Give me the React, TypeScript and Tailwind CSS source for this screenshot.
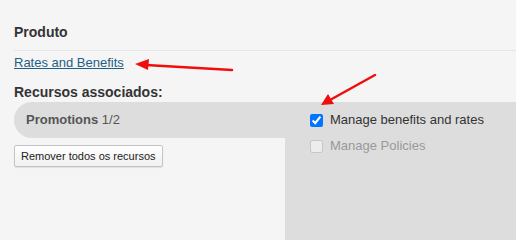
import React from 'react';

export default function App() {
  return (
    <div className="relative w-[516px] h-[240px] overflow-hidden bg-[#f5f5f5] font-['Liberation_Sans',Arial,sans-serif] text-[#333]">
      <div className="pt-[24px]">
        {/* Produto */}
        <h3 className="pl-[14px] text-[14px] font-bold leading-[16px] text-[#333]">Produto</h3>
        <div className="ml-[14px] mt-[10px] border-t border-[#e6e6e6]" />
        <div className="pl-[14px] mt-[3px] leading-[16px]">
          <a href="#" className="text-[13px] text-[#1f5f85] underline">Rates and Benefits</a>
        </div>

        {/* Recursos */}
        <h3 className="pl-[14px] mt-[13px] text-[14px] font-bold leading-[17px] text-[#333]">Recursos associados:</h3>
        <div className="ml-[14px] mt-[1px] h-[36px] rounded-l-[18px] bg-[#dddddd] flex items-center pl-[12px]">
          <span className="text-[13px] text-[#555]"><b>Promotions</b> 1/2</span>
        </div>
        <div className="pl-[14px] mt-[5px]">
          <button className="h-[22px] px-[6px] text-[11px] text-[#222] bg-gradient-to-b from-white to-[#f0f0f0] border border-[#c4c4c4] rounded-[2px] shadow-[0_1px_1px_rgba(0,0,0,0.08)]">
            Remover todos os recursos
          </button>
        </div>
      </div>

      {/* dropdown panel */}
      <div className="absolute left-[285px] top-[102px] right-0 bottom-0 bg-[#dddddd] pt-[10px] pl-[25px]">
        <label className="flex items-center gap-[7px] h-[16px]">
          <input type="checkbox" defaultChecked className="w-[13px] h-[13px] m-0 accent-[#0075ff]" />
          <span className="text-[13px] text-[#333]">Manage benefits and rates</span>
        </label>
        <label className="flex items-center gap-[7px] h-[16px] mt-[10px]">
          <input type="checkbox" disabled className="w-[13px] h-[13px] m-0" />
          <span className="text-[13px] text-[#999]">Manage Policies</span>
        </label>
      </div>

      {/* annotation arrows */}
      <svg className="absolute left-0 top-0 pointer-events-none" width="516" height="240">
        <line x1="232" y1="70" x2="146" y2="65" stroke="#f00d0d" strokeWidth="2.5" strokeLinecap="round" />
        <polygon points="135,64 149,59 148,70" fill="#f00d0d" />
        <line x1="375" y1="75" x2="330" y2="100" stroke="#f00d0d" strokeWidth="2.5" strokeLinecap="round" />
        <polygon points="321,105 328,94 334,104" fill="#f00d0d" />
      </svg>
    </div>
  );
}
